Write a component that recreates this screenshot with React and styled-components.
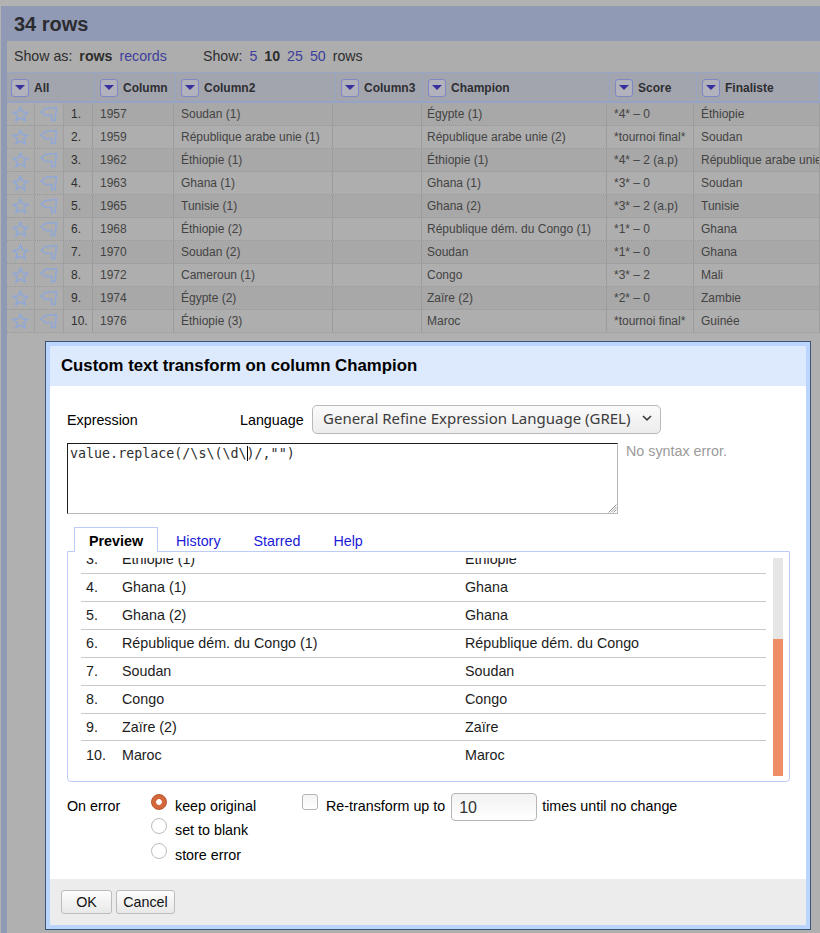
import React from "react";
import styled, { createGlobalStyle } from "styled-components";

const GlobalStyle = createGlobalStyle`
  html, body {
    margin: 0;
    padding: 0;
    width: 820px;
    height: 933px;
    overflow: hidden;
    background: #b2b2b2;
    font-family: "Liberation Sans", Arial, sans-serif;
  }
  * { box-sizing: border-box; }
`;

const HEAD_COLS = "88px 81px 160px 87px 187px 87px 1fr";
const BODY_COLS = "28px 29px 29px 81px 159px 89px 185px 87px 1fr";

const columns = ["All", "Column", "Column2", "Column3", "Champion", "Score", "Finaliste"];

const rows = [
  ["1.", "1957", "Soudan (1)", "Égypte (1)", "*4* – 0", "Éthiopie"],
  ["2.", "1959", "République arabe unie (1)", "République arabe unie (2)", "*tournoi final*", "Soudan"],
  ["3.", "1962", "Éthiopie (1)", "Éthiopie (1)", "*4* – 2 (a.p)", "République arabe unie"],
  ["4.", "1963", "Ghana (1)", "Ghana (1)", "*3* – 0", "Soudan"],
  ["5.", "1965", "Tunisie (1)", "Ghana (2)", "*3* – 2 (a.p)", "Tunisie"],
  ["6.", "1968", "Éthiopie (2)", "République dém. du Congo (1)", "*1* – 0", "Ghana"],
  ["7.", "1970", "Soudan (2)", "Soudan", "*1* – 0", "Ghana"],
  ["8.", "1972", "Cameroun (1)", "Congo", "*3* – 2", "Mali"],
  ["9.", "1974", "Égypte (2)", "Zaïre (2)", "*2* – 0", "Zambie"],
  ["10.", "1976", "Éthiopie (3)", "Maroc", "*tournoi final*", "Guinée"],
];

const preview = [
  ["3.", "Éthiopie (1)", "Éthiopie"],
  ["4.", "Ghana (1)", "Ghana"],
  ["5.", "Ghana (2)", "Ghana"],
  ["6.", "République dém. du Congo (1)", "République dém. du Congo"],
  ["7.", "Soudan", "Soudan"],
  ["8.", "Congo", "Congo"],
  ["9.", "Zaïre (2)", "Zaïre"],
  ["10.", "Maroc", "Maroc"],
];

const Page = styled.div`
  position: relative;
  width: 820px;
  height: 933px;
  padding: 6px 0 0 1px;
  overflow: hidden;
  background: #b2b2b2;
`;

const Workspace = styled.div`
  height: 100%;
  background: #919ab5;
  display: flex;
  flex-direction: column;
`;

const Title = styled.h1`
  margin: 0;
  height: 35px;
  padding: 7px 0 0 13px;
  font-size: 20px;
  line-height: 23px;
  font-weight: bold;
  color: #2c2c30;
`;

const Content = styled.div`
  flex: 1;
  margin-left: 6px;
  background: #b0b0b0;
`;

const Controls = styled.div`
  height: 31px;
  padding: 7px 0 0 7px;
  display: flex;
  font-size: 14.2px;
  line-height: 16px;
  color: #2d2d2d;
  background: #adadad;
`;

const ControlGroup = styled.div`
  display: flex;
  gap: 7px;
  width: ${(p) => p.$width || "auto"};
`;

const PageLink = styled.span`
  color: ${(p) => (p.$current ? "#2d2d2d" : "#3e3e9c")};
  font-weight: ${(p) => (p.$current ? "bold" : "normal")};
`;

const HeadRow = styled.div`
  display: grid;
  grid-template-columns: ${HEAD_COLS};
  height: 31px;
  background: #a3a5ae;
  border-top: 1px solid #99a5c5;
  border-bottom: 2px solid #97a3c6;
`;

const HeadCell = styled.div`
  display: flex;
  align-items: center;
  gap: 5px;
  padding: 1px 0 0 ${(p) => (p.$first ? 4 : 5)}px;
  border-right: 1px solid #99a5c5;
  font-size: 12px;
  font-weight: bold;
  color: #2e2e32;
  white-space: nowrap;
  overflow: hidden;
`;

const MenuButton = styled.span`
  flex: none;
  width: 18px;
  height: 18px;
  display: flex;
  align-items: center;
  justify-content: center;
  border: 1px solid #7f87c4;
  border-radius: 3px;
  background: #b1b2bb;

  &::after {
    content: "";
    border-style: solid;
    border-width: 5px 5px 0;
    border-color: #38309c transparent transparent;
  }
`;

const BodyRow = styled.div`
  display: grid;
  grid-template-columns: ${BODY_COLS};
  height: 23px;
  background: ${(p) => (p.$odd ? "#a8a8a8" : "#aeaeae")};
  border-bottom: 1px dotted #989898;
`;

const BodyCell = styled.div`
  padding: 3px 0 0 ${(p) => p.$pad ?? 7}px;
  font-size: 12px;
  line-height: 16px;
  color: ${(p) => (p.$dark ? "#2e2e2e" : "#434343")};
  white-space: nowrap;
  overflow: hidden;
  border-right: 1px solid #9c9c9c;
`;

const IconCell = styled.div`
  display: flex;
  align-items: center;
  justify-content: center;
  background: #adadad;
  border-right: 1px solid #a0a0a0;
`;

const Star = () => (
  <svg width="17" height="16" viewBox="0 0 17 16" fill="none" stroke="#8fa8d8" strokeWidth="1.5">
    <path d="M8.500 1.200l2.100 4.700 5.100.5-3.900 3.400 1.200 5-4.500-2.600-4.500 2.600 1.200-5-3.900-3.400 5.100-.5z" />
  </svg>
);

const Flag = () => (
  <svg width="18" height="16" viewBox="0 0 18 16" fill="none" stroke="#8fa8d8" strokeWidth="1.5">
    <path d="M1.200 6L5.500 2.500 16.500 1.500 15 14.500H11.500L12 9.500 5.500 9.500z" />
  </svg>
);

const Dialog = styled.div`
  position: absolute;
  left: 45px;
  top: 341px;
  width: 766px;
  height: 589px;
  padding: 4px;
  background: #bcd5ff;
  border: 1px solid #3a5478;
  display: flex;
  flex-direction: column;
  color: #000;
`;

const DialogHeader = styled.div`
  height: 40px;
  flex: none;
  padding: 10px 0 0 11px;
  background: #dde9fd;
  font-size: 16.8px;
  line-height: 19px;
  font-weight: bold;
`;

const DialogBody = styled.div`
  flex: 1;
  background: #fff;
  padding: 18px 16px 0 17px;
  font-size: 14.3px;
`;

const ExpressionRow = styled.div`
  height: 30px;
  display: flex;
  align-items: center;
`;

const Label = styled.span`
  width: ${(p) => p.$width};
  line-height: 16px;
  padding-top: 1px;
`;

const SelectBox = styled.div`
  width: 349px;
  height: 29px;
  display: flex;
  align-items: center;
  justify-content: space-between;
  padding: 0 8px 2px 10px;
  border: 1px solid #b9b9b9;
  border-radius: 5px;
  background: linear-gradient(#fbfbfb, #ececec);
  font-family: "Noto Sans", "Open Sans", sans-serif;
  font-size: 15px;
  color: #3c3c3c;
`;

const ExpressionArea = styled.div`
  display: flex;
  gap: 8px;
  margin-top: 9px;
`;

const CodeBox = styled.div`
  position: relative;
  width: 551px;
  height: 71px;
  padding: 2px;
  border: 1px solid #b9b9b9;
  border-top-color: #1d1d1d;
  border-left-color: #1d1d1d;
  font-family: "DejaVu Sans Mono", monospace;
  font-size: 13.33px;
  line-height: 16px;
  color: #2f2f2f;
`;

const Caret = styled.span`
  display: inline-block;
  width: 1px;
  height: 15px;
  margin-right: -1px;
  vertical-align: -3px;
  background: #000;
`;

const Grip = styled.svg`
  position: absolute;
  right: 0;
  bottom: 0;
`;

const Status = styled.div`
  line-height: 16px;
  color: #9a9a9a;
`;

const TabBar = styled.div`
  display: flex;
  margin: 13px 0 0 7px;
  height: 25px;
  position: relative;
  z-index: 1;
`;

const Tab = styled.div`
  height: ${(p) => (p.$active ? 25 : 24)}px;
  padding: 5px ${(p) => (p.$active ? 14 : 15.5)}px 0;
  margin-right: ${(p) => (p.$active ? 1.5 : 0)}px;
  line-height: 16px;
  font-weight: ${(p) => (p.$active ? "bold" : "normal")};
  color: ${(p) => (p.$active ? "#000" : "#1a1ad6")};
  background: #fff;
  border: 1px solid ${(p) => (p.$active ? "#bccdf5" : "transparent")};
  border-bottom: none;
`;

const PreviewPanel = styled.div`
  height: 231px;
  margin-top: -1px;
  padding: 6px 6px 5px 13px;
  display: flex;
  gap: 7px;
  border: 1px solid #bccdf5;
  border-radius: 0 0 4px 4px;
`;

const PreviewList = styled.div`
  flex: 1;
  height: 218px;
  display: flex;
  flex-direction: column;
  justify-content: flex-end;
  overflow: hidden;
`;

const PreviewRow = styled.div`
  flex: none;
  height: ${(p) => p.$height}px;
  display: grid;
  grid-template-columns: 36px 343px 1fr;
  padding: ${(p) => (p.$last ? 6 : 5)}px 0 0 5px;
  line-height: 16px;
  color: #1c1c1c;
  border-bottom: ${(p) => (p.$last ? "none" : "1px solid #c9c9c9")};
`;

const ScrollTrack = styled.div`
  width: 10px;
  height: 218px;
  padding-top: 81px;
  background: #e6e6e6;
`;

const ScrollThumb = styled.div`
  height: 100%;
  background: #ef8d66;
`;

const Options = styled.div`
  display: flex;
  margin-top: 14px;
`;

const OptionLabel = styled.div`
  width: 84px;
  padding-top: 2px;
  line-height: 16px;
`;

const RadioColumn = styled.div`
  width: 151px;
  display: flex;
  flex-direction: column;
`;

const RadioLine = styled.div`
  display: flex;
  gap: 8px;
  height: ${(p) => p.$h}px;
  line-height: 16px;
  padding-top: 2px;
`;

const Radio = styled.span`
  flex: none;
  width: 16px;
  height: 16px;
  margin-top: -4px;
  border-radius: 50%;
  border: ${(p) => (p.$on ? "1px solid #b9532a" : "1.5px solid #bcbcbc")};
  background: ${(p) =>
    p.$on
      ? "radial-gradient(circle, #fff 0 2.5px, #d2683c 3.2px)"
      : "#fff"};
`;

const Check = styled.span`
  flex: none;
  width: 16px;
  height: 16px;
  margin: -4px 8px 0 0;
  border: 1px solid #b5b5b5;
  border-radius: 3px;
  background: linear-gradient(#f4f4f4, #fff);
`;

const RetransformLine = styled.div`
  display: flex;
  align-items: flex-start;
  line-height: 16px;
  padding-top: 2px;
`;

const TimesInput = styled.span`
  width: 86px;
  height: 28px;
  margin: -5px 5px 0 6px;
  padding: 6px 0 0 7px;
  border: 1px solid #b5b5b5;
  border-radius: 4px;
  background: linear-gradient(#f2f2f2, #fff);
  font-size: 16px;
  color: #333;
`;

const DialogFooter = styled.div`
  height: 46px;
  flex: none;
  display: flex;
  gap: 4px;
  padding: 11px 0 0 11px;
  background: #ececec;
`;

const Button = styled.button`
  width: ${(p) => p.$width}px;
  height: 24px;
  padding: 0;
  border: 1px solid #bcbcbc;
  border-radius: 3px;
  background: linear-gradient(#fdfdfd, #e8e8e8);
  font-family: inherit;
  font-size: 14.3px;
  color: #111;
`;

// rows 9 and 10 sit on fractional offsets in the real page
const previewRowHeight = (i) => (i === 7 ? 35 : i === 6 ? 27 : 28);

export default function App() {
  return (
    <>
      <GlobalStyle />
      <Page>
        <Workspace>
          <Title>34 rows</Title>
          <Content>
            <Controls>
              <ControlGroup $width="189px">
                <span>Show as:</span>
                <PageLink $current>rows</PageLink>
                <PageLink>records</PageLink>
              </ControlGroup>
              <ControlGroup>
                <span>Show:</span>
                <PageLink>5</PageLink>
                <PageLink $current>10</PageLink>
                <PageLink>25</PageLink>
                <PageLink>50</PageLink>
                <span>rows</span>
              </ControlGroup>
            </Controls>
            <HeadRow>
              {columns.map((title, i) => (
                <HeadCell key={title} $first={i === 0}>
                  <MenuButton />
                  {title}
                </HeadCell>
              ))}
            </HeadRow>
            {rows.map((row, i) => (
              <BodyRow key={row[0]} $odd={i % 2 === 0}>
                <IconCell><Star /></IconCell>
                <IconCell><Flag /></IconCell>
                <BodyCell $dark>{row[0]}</BodyCell>
                <BodyCell>{row[1]}</BodyCell>
                <BodyCell>{row[2]}</BodyCell>
                <BodyCell />
                <BodyCell $pad={5}>{row[3]}</BodyCell>
                <BodyCell>{row[4]}</BodyCell>
                <BodyCell>{row[5]}</BodyCell>
              </BodyRow>
            ))}
          </Content>
        </Workspace>

        <Dialog>
          <DialogHeader>Custom text transform on column Champion</DialogHeader>
          <DialogBody>
            <ExpressionRow>
              <Label $width="173px">Expression</Label>
              <Label $width="72px">Language</Label>
              <SelectBox>
                General Refine Expression Language (GREL)
                <svg width="10" height="6" viewBox="0 0 10 6" fill="none" stroke="#3c3c3c" strokeWidth="1.6">
                  <path d="M1 1l4 3.800L9 1" />
                </svg>
              </SelectBox>
            </ExpressionRow>
            <ExpressionArea>
              <CodeBox>
                value.replace(/\s\(\d\<Caret />)/,"")
                <Grip width="10" height="10" viewBox="0 0 10 10" stroke="#9a9a9a" strokeWidth="1">
                  <path d="M9.500 1.500L1.500 9.500M9.500 4L4 9.500M9.500 6.500L6.500 9.500" />
                </Grip>
              </CodeBox>
              <Status>No syntax error.</Status>
            </ExpressionArea>
            <TabBar>
              <Tab $active>Preview</Tab>
              <Tab>History</Tab>
              <Tab>Starred</Tab>
              <Tab>Help</Tab>
            </TabBar>
            <PreviewPanel>
              <PreviewList>
                {preview.map((row, i) => (
                  <PreviewRow key={row[0]} $height={previewRowHeight(i)} $last={i === preview.length - 1}>
                    <span>{row[0]}</span>
                    <span>{row[1]}</span>
                    <span>{row[2]}</span>
                  </PreviewRow>
                ))}
              </PreviewList>
              <ScrollTrack>
                <ScrollThumb />
              </ScrollTrack>
            </PreviewPanel>
            <Options>
              <OptionLabel>On error</OptionLabel>
              <RadioColumn>
                <RadioLine $h={24}><Radio $on />keep original</RadioLine>
                <RadioLine $h={25}><Radio />set to blank</RadioLine>
                <RadioLine $h={24}><Radio />store error</RadioLine>
              </RadioColumn>
              <RetransformLine>
                <Check />
                Re-transform up to
                <TimesInput>10</TimesInput>
                times until no change
              </RetransformLine>
            </Options>
          </DialogBody>
          <DialogFooter>
            <Button $width={51}>OK</Button>
            <Button $width={59}>Cancel</Button>
          </DialogFooter>
        </Dialog>
      </Page>
    </>
  );
}
